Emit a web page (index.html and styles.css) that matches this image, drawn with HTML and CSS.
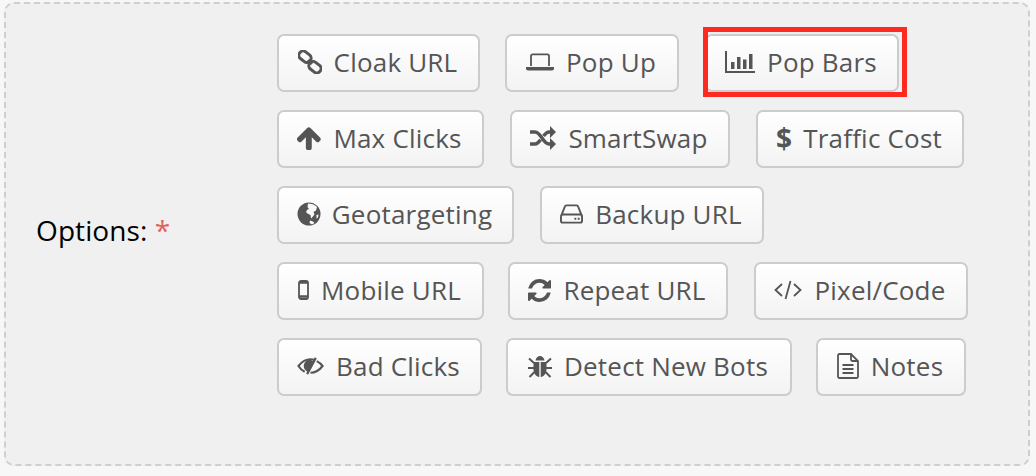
FILE: index.html
```html
<!DOCTYPE html>
<html lang="en">
<head>
<meta charset="utf-8">
<title>Options</title>
<link rel="stylesheet" href="styles.css">
</head>
<body>
<section class="panel">
  <div class="label">Options: <span class="req">*</span></div>
  <div class="rows">
    <div class="row">
      <button class="btn w-cloak"><svg class="ic" viewBox="0 0 24 24"><g fill="none" stroke="#555" stroke-width="3"><rect x="0.500" y="2.500" width="13" height="8.500" rx="4" transform="rotate(38 7 6.700)"/><rect x="10.500" y="13" width="13" height="8.500" rx="4" transform="rotate(38 17 17.200)"/><path d="M10 10l4 4"/></g></svg>Cloak URL</button>
      <button class="btn w-popup"><svg class="ic ic-laptop" viewBox="0 0 28 18"><path fill="none" stroke="#555" stroke-width="1.800" d="M5 13V3a1.600 1.600 0 0 1 1.600-1.600h14.800A1.600 1.600 0 0 1 23 3v10"/><path fill="#555" d="M0 14h28v1.500a2 2 0 0 1-2 2H2a2 2 0 0 1-2-2z"/></svg>Pop Up</button>
      <button class="btn w-bars"><span class="mark"></span><svg class="ic ic-bars" viewBox="0 0 30 22"><path fill="none" stroke="#555" stroke-width="2" d="M1 0v21h29"/><path fill="#555" d="M6 11h3.500v7H6zM12 6h3.500v12H12zM18 8.500h3.500V18H18zM24 3h3.500v15H24z"/></svg>Pop Bars</button>
    </div>
    <div class="row">
      <button class="btn w-max"><svg class="ic" viewBox="128 192 1560 1400"><path fill="#555" d="M1675 971q0 51-37 90l-75 75q-38 38-91 38-54 0-90-38l-294-293v704q0 52-37.500 84.500t-90.500 32.500h-128q-53 0-90.500-32.500t-37.500-84.500v-704l-294 293q-36 38-90 38t-90-38l-75-75q-38-38-38-90 0-53 38-91l651-651q35-37 90-37 54 0 91 37l651 651q37 39 37 91z"/></svg>Max Clicks</button>
      <button class="btn w-swap"><svg class="ic ic-shuffle" viewBox="0 0 26 24"><path fill="none" stroke="#555" stroke-width="3.400" d="M0 6h5c6 0 8 12 14 12h2M0 18h5c2.500 0 4-2 5.500-4.200M13.500 10C15 8 16.500 6 19 6h2"/><path fill="#555" d="M20 0l6 6-6 6zM20 12l6 6-6 6z"/></svg>SmartSwap</button>
      <button class="btn w-cost"><span class="dollar">$</span>Traffic Cost</button>
    </div>
    <div class="row">
      <button class="btn w-geo"><svg class="ic ic-globe" viewBox="0 0 24 24"><circle cx="12" cy="12" r="11.500" fill="#555"/><path fill="#f9f9f9" d="M11 1.500c3 0 7 1 9 3.500l-1 3.500-2.500 1.500 1 2.500-2.500 3-1 1-.5-3.500-3-1.500-1.500-1.500 1.500-2.500 1.500-.5-1.500-2zM13 18.500l3 1 1.500 1.500-2.500 1.500-2.500-1.500zM19.500 13l2-.5-.5 3-1.500 1z"/></svg>Geotargeting</button>
      <button class="btn w-backup"><svg class="ic ic-hdd" viewBox="0 0 24 20"><path fill="none" stroke="#555" stroke-width="2" d="M1 12.500 5 2.500A2 2 0 0 1 6.800 1h10.400A2 2 0 0 1 19 2.500l4 10M3 10.500h18a2 2 0 0 1 2 2V17a2 2 0 0 1-2 2H3a2 2 0 0 1-2-2v-4.500a2 2 0 0 1 2-2z"/><path fill="#555" d="M15 14h2v2h-2zM18.500 14h2v2h-2z"/></svg>Backup URL</button>
    </div>
    <div class="row">
      <button class="btn w-mobile"><svg class="ic ic-mobile" viewBox="0 0 11 20"><rect x="1" y="1" width="9" height="18" rx="2" fill="none" stroke="#555" stroke-width="1.800"/><path stroke="#555" stroke-width="2.400" d="M1 16.500h9M1 2.500h9"/></svg>Mobile URL</button>
      <button class="btn w-repeat"><svg class="ic ic-refresh" viewBox="128 128 1536 1536"><path fill="#555" d="M1639 1056q0 5-1 7-64 268-268 434.500t-478 166.500q-146 0-282.500-55t-243.500-157l-129 129q-19 19-45 19t-45-19-19-45v-448q0-26 19-45t45-19h448q26 0 45 19t19 45-19 45l-137 137q71 66 161 102t187 36q134 0 250-65t186-179q11-17 53-117 8-23 30-23h192q13 0 22.500 9.500t9.500 22.500zm25-800v448q0 26-19 45t-45 19h-448q-26 0-45-19t-19-45 19-45l138-138q-148-137-349-137-134 0-250 65t-186 179q-11 17-53 117-8 23-30 23h-199q-13 0-22.500-9.500t-9.500-22.500v-7q65-268 270-434.500t480-166.500q146 0 284 55.500t245 156.500l130-129q19-19 45-19t45 19 19 45z"/></svg>Repeat URL</button>
      <button class="btn w-pixel"><svg class="ic ic-code" viewBox="0 0 28 20"><path fill="none" stroke="#555" stroke-width="1.800" d="M8 4 1.500 10 8 16M20 4l6.500 6-6.500 6M16.500 1l-5 18"/></svg>Pixel/Code</button>
    </div>
    <div class="row">
      <button class="btn w-bad"><svg class="ic ic-eye" viewBox="0 0 28 20"><path fill="none" stroke="#555" stroke-width="2.200" d="M8 16C5 14.500 3 12.500 1.500 10 5 5.500 9 3 14 3c1.500 0 3 .2 4.400.7M20.500 5c2.500 1.300 4.500 3 6 5-3 4-7.500 7-12.500 7"/><path fill="#555" d="M7 10c0-3.800 3.200-6.500 7-6.500l2.500 1.200L10.500 16l-2-2c-1-1.200-1.500-2.500-1.500-4zM18.500 1 20.500 2.200 11.500 19 9.500 17.800z"/></svg>Bad Clicks</button>
      <button class="btn w-detect"><svg class="ic ic-bug" viewBox="0 0 24 24"><path fill="#555" d="M7.500 6.500C8 3.500 10 2 12 2s4 1.500 4.500 4.500zM5.500 8h5.800v15C8 22.500 5.500 19.500 5.500 15zM12.700 8h5.800v7c0 4.500-2.500 7.500-5.800 8z"/><path fill="none" stroke="#555" stroke-width="2" d="M1 4.500 6 9M23 4.500 18 9M0 14h6M24 14h-6M1.500 23 6.500 18M22.500 23l-5-5"/></svg>Detect New Bots</button>
      <button class="btn w-notes"><svg class="ic ic-file" viewBox="0 0 22 26"><path fill="none" stroke="#555" stroke-width="1.800" d="M14 1H2.500A1.500 1.500 0 0 0 1 2.500v21A1.500 1.500 0 0 0 2.500 25h17a1.500 1.500 0 0 0 1.500-1.500V8zV6.500A1.500 1.500 0 0 0 15.500 8H21"/><path stroke="#555" stroke-width="1.800" d="M5.500 12h11M5.500 16h11M5.500 20h11"/></svg>Notes</button>
    </div>
  </div>
</section>
</body>
</html>
```

FILE: styles.css
```css
* { box-sizing: border-box; }
html, body { margin: 0; height: 100%; }
body {
  width: 1036px;
  height: 476px;
  overflow: hidden;
  background: #f7f7f7;
  padding: 2px 6px 10px 4px;
  font-family: "Open Sans", "Noto Sans", sans-serif;
}
.panel {
  display: flex;
  align-items: flex-start;
  height: 464px;
  padding: 0 0 0 30px;
  background: #f0f0f0;
  border: 2px dashed #cfcfcf;
  border-radius: 10px;
}
.label {
  width: 241px;
  flex: none;
  align-self: center;
  margin-bottom: 8px;
  font-size: 28px;
  line-height: 36px;
  letter-spacing: 0.1px;
  color: #000;
}
.req { color: #e0625c; }
.rows { display: flex; flex-direction: column; gap: 18px; padding-top: 30px; }
.row { display: flex; gap: 25px; }
.btn {
  position: relative;
  display: flex;
  align-items: center;
  justify-content: center;
  height: 58px;
  padding: 0 2px 2px 0;
  font-family: inherit;
  font-size: 26px;
  letter-spacing: 0.2px;
  color: #555;
  background: linear-gradient(#ffffff, #f3f3f3);
  border: 2px solid #cccccc;
  border-radius: 7px;
  white-space: nowrap;
}
.ic { flex: none; display: block; width: 24px; height: 24px; margin-right: 12px; }
.ic-laptop { width: 28px; height: 18px; margin-right: 12px; }
.ic-bars { width: 30px; height: 22px; margin-right: 12px; }
.ic-shuffle { width: 26px; height: 24px; }
.ic-globe { margin-right: 11px; }
.ic-hdd { width: 23px; height: 20px; }
.ic-mobile { width: 11px; height: 20px; margin-right: 12px; }
.ic-refresh { width: 23px; height: 23px; }
.ic-code { width: 28px; height: 20px; }
.ic-eye { width: 27px; height: 20px; }
.ic-file { width: 22px; height: 26px; margin-right: 12px; }
.dollar { font-weight: 700; font-size: 28px; margin-right: 11px; }
.mark {
  position: absolute;
  left: -4px;
  top: -9px;
  width: 204px;
  height: 70px;
  border: 5px solid #ff2a1f;
}
.w-cloak { width: 203px; }
.w-popup { width: 174px; }
.w-bars { width: 194px; margin-left: 1px; }
.w-max { width: 207px; }
.w-swap { width: 220px; margin-left: 1px; }
.w-cost { width: 208px; margin-left: 1px; }
.w-geo { width: 237px; }
.w-backup { width: 224px; margin-left: 1px; }
.w-mobile { width: 207px; }
.w-repeat { width: 220px; margin-left: -1px; }
.w-pixel { width: 214px; margin-left: 1px; }
.w-bad { width: 205px; }
.w-detect { width: 286px; margin-left: -1px; }
.w-notes { width: 150px; margin-left: -1px; }
```
